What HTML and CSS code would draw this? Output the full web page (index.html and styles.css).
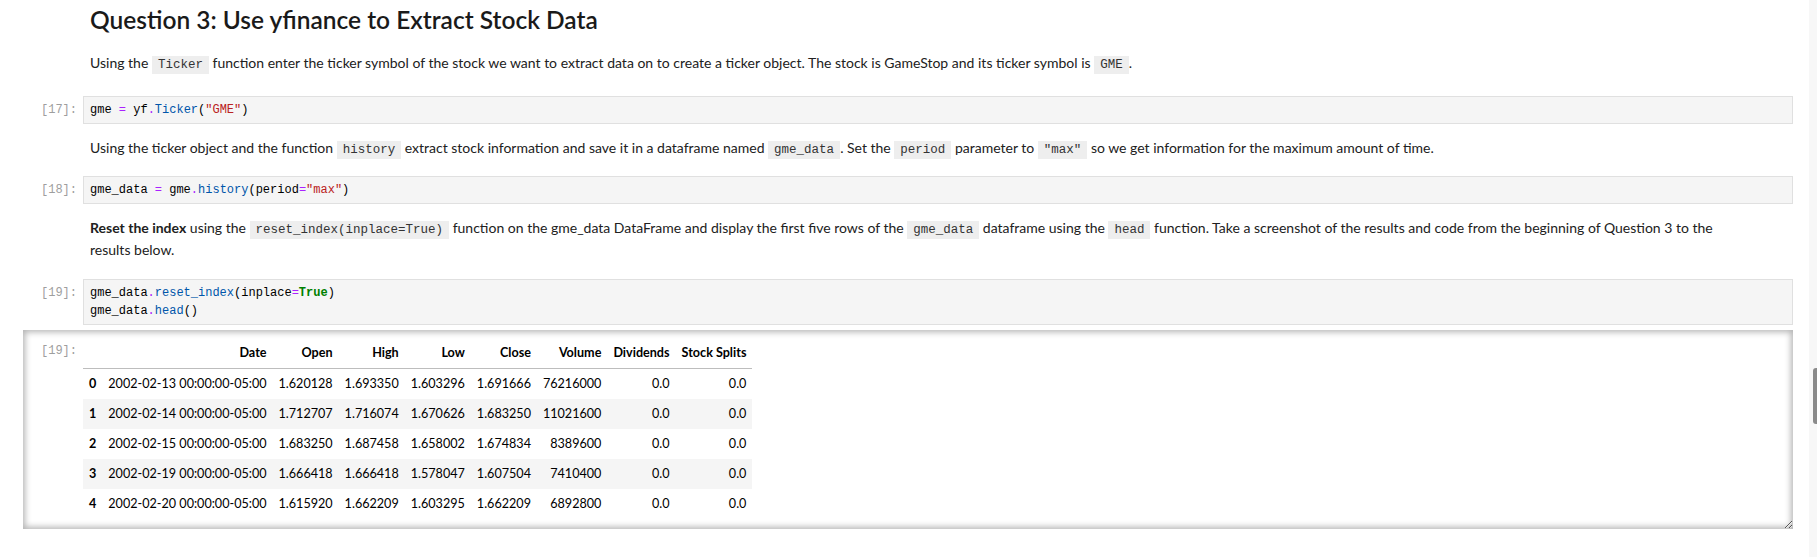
FILE: index.html
```html
<!DOCTYPE html>
<html lang="en">
<head>
<meta charset="utf-8">
<title>Question 3</title>
<link rel="stylesheet" href="styles.css">
</head>
<body>
<div class="app">
  <main class="notebook">
    <div class="cell md-cell first">
      <div class="prompt"></div>
      <div class="md">
        <h3>Question 3: Use yfinance to Extract Stock Data</h3>
        <p>Using the <code>Ticker</code> function enter the ticker symbol of the stock we want to extract data on to create a ticker object. The stock is GameStop and its ticker symbol is <code>GME</code>.</p>
      </div>
    </div>

    <div class="cell code-cell">
      <div class="prompt">[17]:</div>
      <div class="editor"><pre>gme <span class="op">=</span> yf<span class="op">.</span><span class="prop">Ticker</span>(<span class="str">"GME"</span>)</pre></div>
    </div>

    <div class="cell md-cell">
      <div class="prompt"></div>
      <div class="md">
        <p>Using the ticker object and the function <code>history</code> extract stock information and save it in a dataframe named <code>gme_data</code>. Set the <code>period</code> parameter to <code>"max"</code> so we get information for the maximum amount of time.</p>
      </div>
    </div>

    <div class="cell code-cell">
      <div class="prompt">[18]:</div>
      <div class="editor"><pre>gme_data <span class="op">=</span> gme<span class="op">.</span><span class="prop">history</span>(period<span class="op">=</span><span class="str">"max"</span>)</pre></div>
    </div>

    <div class="cell md-cell last">
      <div class="prompt"></div>
      <div class="md">
        <p><strong>Reset the index</strong> using the <code>reset_index(inplace=True)</code> function on the gme_data DataFrame and display the first five rows of the <code>gme_data</code> dataframe using the <code>head</code> function. Take a screenshot of the results and code from the beginning of Question 3 to the results below.</p>
      </div>
    </div>

    <div class="cell code-cell">
      <div class="prompt">[19]:</div>
      <div class="editor"><pre>gme_data<span class="op">.</span><span class="prop">reset_index</span>(inplace<span class="op">=</span><span class="kw">True</span>)
gme_data<span class="op">.</span><span class="prop">head</span>()</pre></div>
    </div>

    <div class="cell out-cell">
      <div class="prompt">[19]:</div>
      <div class="out">
        <table class="df">
          <thead>
            <tr><th></th><th>Date</th><th>Open</th><th>High</th><th>Low</th><th>Close</th><th>Volume</th><th>Dividends</th><th>Stock Splits</th></tr>
          </thead>
          <tbody>
            <tr><th>0</th><td>2002-02-13 00:00:00-05:00</td><td>1.620128</td><td>1.693350</td><td>1.603296</td><td>1.691666</td><td>76216000</td><td>0.0</td><td>0.0</td></tr>
            <tr><th>1</th><td>2002-02-14 00:00:00-05:00</td><td>1.712707</td><td>1.716074</td><td>1.670626</td><td>1.683250</td><td>11021600</td><td>0.0</td><td>0.0</td></tr>
            <tr><th>2</th><td>2002-02-15 00:00:00-05:00</td><td>1.683250</td><td>1.687458</td><td>1.658002</td><td>1.674834</td><td>8389600</td><td>0.0</td><td>0.0</td></tr>
            <tr><th>3</th><td>2002-02-19 00:00:00-05:00</td><td>1.666418</td><td>1.666418</td><td>1.578047</td><td>1.607504</td><td>7410400</td><td>0.0</td><td>0.0</td></tr>
            <tr><th>4</th><td>2002-02-20 00:00:00-05:00</td><td>1.615920</td><td>1.662209</td><td>1.603295</td><td>1.662209</td><td>6892800</td><td>0.0</td><td>0.0</td></tr>
          </tbody>
        </table>
      </div>
    </div>
  </main>
  <div class="track"><div class="thumb"></div></div>
</div>
</body>
</html>
```

FILE: styles.css
```css
html, body {
  margin: 0;
  padding: 0;
  background: #ffffff;
}

body {
  font-family: Lato, "Liberation Sans", sans-serif;
  color: #212121;
}

.app {
  display: flex;
  height: 557px;
  overflow: hidden;
}

.notebook {
  flex: 1;
  min-width: 0;
  padding: 0 16px 0 23px;
}

.track {
  width: 8px;
  flex: none;
  background: #f7f7f7;
}

.thumb {
  margin-top: 368px;
  margin-left: 4px;
  width: 4px;
  height: 56px;
  background: #8a8a8a;
  border-radius: 3px 0 0 3px;
}

.cell {
  display: flex;
}

.prompt {
  width: 60px;
  flex: none;
  box-sizing: border-box;
  padding-right: 6px;
  text-align: right;
  font-family: "Liberation Mono", "DejaVu Sans Mono", monospace;
  font-size: 12px;
  line-height: 18px;
  color: #9e9e9e;
}

/* markdown */
.md-cell {
  padding: 13px 0 17px;
}

.md-cell.first {
  padding: 6px 0 22px;
}

.md-cell.last {
  padding-bottom: 18px;
}

.md {
  flex: 1;
  min-width: 0;
  padding-left: 7px;
  padding-right: 60px;
}

.md h3 {
  margin: 0;
  font-size: 24.5px;
  line-height: 28px;
  font-weight: 600;
  color: #1a1a1a;
}

.md p {
  margin: 0;
  font-size: 14px;
  line-height: 22px;
}

.md h3 + p {
  margin-top: 18px;
}

.md code {
  font-family: "Liberation Mono", "DejaVu Sans Mono", monospace;
  font-size: 12.5px;
  line-height: 14px;
  background: #eeeeee;
  padding: 2px 6px;
  color: #333;
}

/* code cells */
.code-cell .prompt {
  padding-top: 5px;
}

.editor {
  flex: 1;
  min-width: 0;
  background: #f5f5f5;
  border: 1px solid #e0e0e0;
  padding: 4px 6px;
}

.editor pre {
  margin: 0;
  font-family: "Liberation Mono", "DejaVu Sans Mono", monospace;
  font-size: 12px;
  line-height: 18px;
  color: #000;
}

.op { color: #aa22ff; }
.prop { color: #0055aa; }
.str { color: #ba2121; }
.kw { color: #008000; font-weight: bold; }

/* output */
.out-cell {
  margin-top: 5px;
  height: 199px;
  box-sizing: border-box;
  padding-top: 6px;
  box-shadow: inset 0 0 6px 2px rgba(0, 0, 0, 0.3);
  resize: vertical;
  overflow: auto;
}

.out-cell .prompt {
  padding-top: 6px;
}

.out {
  flex: 1;
  min-width: 0;
  padding-top: 2px;
}

.df {
  border-collapse: collapse;
  font-size: 12.6px;
  line-height: 18px;
  color: #000;
}

.df th,
.df td {
  padding: 6px;
  text-align: right;
  white-space: nowrap;
  font-weight: normal;
}

.df th {
  font-weight: bold;
}

.df thead th {
  border-bottom: 1px solid #bdbdbd;
}

.df tbody tr:nth-child(even) {
  background: #f5f5f5;
}
```
